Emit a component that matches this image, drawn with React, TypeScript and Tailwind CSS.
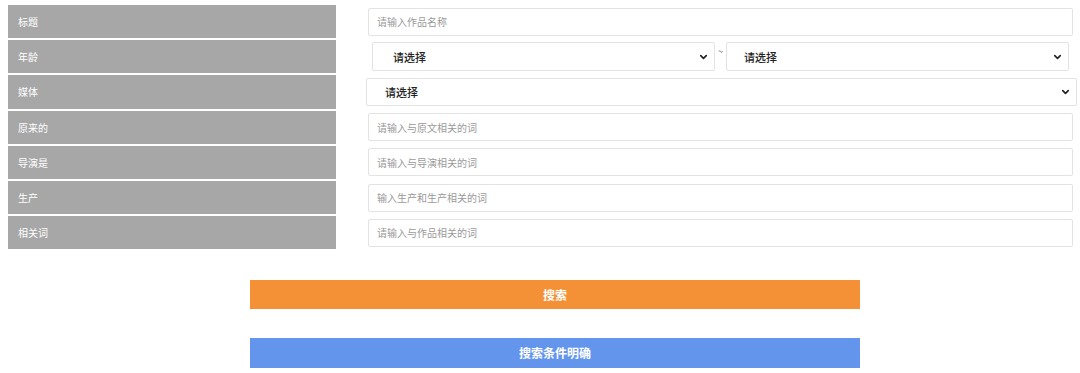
import { ChevronDown } from 'lucide-react';

const font = { fontFamily: '"Noto Sans CJK SC", "Noto Sans", sans-serif' };

type Row =
	| { label: string; kind: 'input'; placeholder: string }
	| { label: string; kind: 'range' }
	| { label: string; kind: 'select' };

const rows: Row[] = [
	{ label: '标题', kind: 'input', placeholder: '请输入作品名称' },
	{ label: '年龄', kind: 'range' },
	{ label: '媒体', kind: 'select' },
	{ label: '原来的', kind: 'input', placeholder: '请输入与原文相关的词' },
	{ label: '导演是', kind: 'input', placeholder: '请输入与导演相关的词' },
	{ label: '生产', kind: 'input', placeholder: '输入生产和生产相关的词' },
	{ label: '相关词', kind: 'input', placeholder: '请输入与作品相关的词' },
];

function Select({ className, textPad }: { className: string; textPad: string }) {
	return (
		<div className={`relative ${className}`}>
			<select
				className={`appearance-none w-full h-full bg-white border border-[#e3e3e3] rounded-[2px] ${textPad} text-[11px] font-medium text-[#222] outline-none`}
				defaultValue=""
			>
				<option value="">请选择</option>
			</select>
			<ChevronDown
				className="absolute right-[6px] top-1/2 -translate-y-1/2 w-[11px] h-[11px] text-[#222] pointer-events-none"
				strokeWidth={3.5}
			/>
		</div>
	);
}

export default function App() {
	return (
		<div className="w-[1080px] h-[373px] bg-white overflow-hidden" style={font}>
			{/* Search form rows */}
			<div className="flex flex-col gap-[2px] pt-[5px] pl-[8px]">
				{rows.map((row) => (
					<div key={row.label} className="flex items-center h-[33.2px]">
						<div className="w-[328px] h-full bg-[#a7a7a7] flex items-center pl-[10px] text-[10px] text-white">
							{row.label}
						</div>
						<div className="ml-[30px] w-[711px] h-full flex items-center">
							{row.kind === 'input' && (
								<input
									className="ml-[2px] w-[705px] h-[28px] border border-[#e3e3e3] rounded-[2px] px-[8px] text-[10px] placeholder:text-[#9a9a9a] outline-none"
									placeholder={row.placeholder}
								/>
							)}
							{row.kind === 'range' && (
								<div className="flex items-center h-[29px] ml-[6px]">
									<Select className="w-[343px] h-[29px]" textPad="pl-[20px]" />
									<span className="w-[11px] text-center text-[9px] text-[#555] -mt-[10px]">~</span>
									<Select className="w-[343px] h-[29px]" textPad="pl-[17px]" />
								</div>
							)}
							{row.kind === 'select' && (
								<Select className="w-[711px] h-[28px]" textPad="pl-[18px]" />
							)}
						</div>
					</div>
				))}
			</div>

			{/* Buttons */}
			<div className="flex flex-col gap-[29px] ml-[250px] mt-[31px] w-[610px]">
				<button className="h-[29px] bg-[#f49136] text-white text-[12px] font-bold">搜索</button>
				<button className="h-[30px] bg-[#6495ed] text-white text-[12px] font-bold">搜索条件明确</button>
			</div>
		</div>
	);
}
